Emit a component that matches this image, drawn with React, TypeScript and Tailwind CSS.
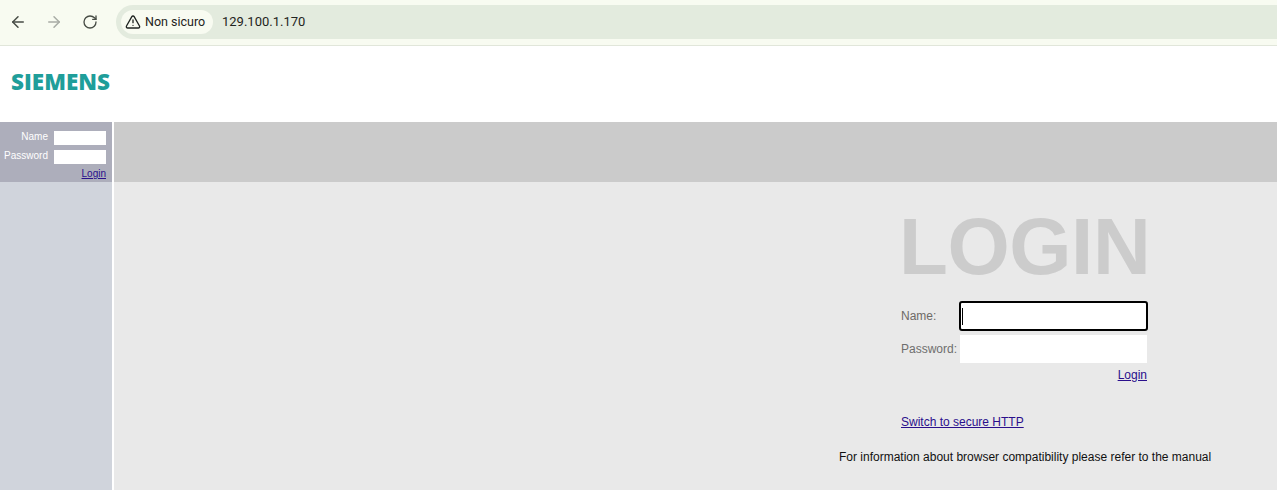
import { ArrowLeft, ArrowRight, RotateCw, TriangleAlert } from "lucide-react";

export default function App() {
  return (
    <div className="flex h-[490px] w-[1277px] flex-col overflow-hidden bg-white font-['Liberation_Sans',Arial,sans-serif]">
      {/* browser bar */}
      <div className="flex h-[46px] flex-shrink-0 items-center border-b border-[#e1e6da] bg-[#f8fbf1] pb-[1px]">
        <div className="flex w-[116px] items-center text-[#474c45]">
          <ArrowLeft size={18} strokeWidth={2} className="ml-[9px]" />
          <ArrowRight size={18} strokeWidth={2} className="ml-[18px] text-[#a8aca5]" />
          <RotateCw size={16} strokeWidth={2} className="ml-[19px]" />
        </div>
        <div className="flex h-[34px] flex-1 items-center rounded-l-[17px] bg-[#e3ebde] pl-[5px] font-['Roboto',sans-serif] text-[#1f2421]">
          <div className="flex h-[24px] w-[92px] items-center gap-[4px] rounded-[12px] bg-[#f8fbf1] pl-[4px] text-[12.5px]">
            <TriangleAlert size={16} strokeWidth={2} />
            <span>Non sicuro</span>
          </div>
          <span className="ml-[9px] text-[13px]">129.100.1.170</span>
        </div>
      </div>

      {/* logo */}
      <div className="flex h-[76px] flex-shrink-0 items-center pl-[11px]">
        <span className="mb-[4px] font-['Open_Sans',sans-serif] text-[22.5px] leading-none font-extrabold text-[#1f9e9a]">
          SIEMENS
        </span>
      </div>

      <div className="flex flex-1">
        {/* sidebar */}
        <div className="flex w-[112px] flex-col bg-[#d0d4dc]">
          <div className="flex h-[60px] flex-col items-end bg-[#adaebb] pt-[9px] pr-[6px] text-[10px] text-white">
            <div className="flex h-[14px] items-center gap-[6px]">
              <span className="mb-[3px]">Name</span>
              <div className="h-[14px] w-[52px] bg-white" />
            </div>
            <div className="mt-[5px] flex h-[14px] items-center gap-[6px]">
              <span className="mb-[3px]">Password</span>
              <div className="h-[14px] w-[52px] bg-white" />
            </div>
            <a className="mt-[4px] text-[10px] leading-[12px] text-[#2a0f8c] underline">Login</a>
          </div>
        </div>

        {/* content */}
        <div className="ml-[2px] flex flex-1 flex-col bg-[#e9e9e9]">
          <div className="h-[60px] flex-shrink-0 bg-[#cbcbcb]" />
          <div className="flex flex-col pl-[725px] text-[12px]">
            <div className="pl-[62px]">
              <div className="mt-[20px] -ml-[2px] text-[80px] leading-[90px] font-bold tracking-[-0.4px] text-[#cccccc]">LOGIN</div>
              <div className="mt-[9px] flex w-[247px] items-center">
                <span className="w-[58px] text-[#6e6a66]">Name:</span>
                <div className="flex h-[30px] w-[189px] flex-shrink-0 items-center rounded-[3px] border-2 border-black bg-white pl-[1px]">
                  <div className="h-[17px] w-[1px] bg-black" />
                </div>
              </div>
              <div className="mt-[4px] flex w-[246px] items-center">
                <span className="w-[59px] text-[#6e6e6e]">Password:</span>
                <div className="h-[28px] flex-1 bg-white" />
              </div>
              <div className="mt-[5px] w-[246px] text-right leading-[14px]">
                <a className="text-[#2a0f8c] underline">Login</a>
              </div>
              <a className="mt-[33px] block leading-[14px] text-[#2a0f8c] underline">Switch to secure HTTP</a>
            </div>
            <p className="mt-[21px] leading-[14px] whitespace-nowrap text-[#111111]">
              For information about browser compatibility please refer to the manual
            </p>
          </div>
        </div>
      </div>
    </div>
  );
}
